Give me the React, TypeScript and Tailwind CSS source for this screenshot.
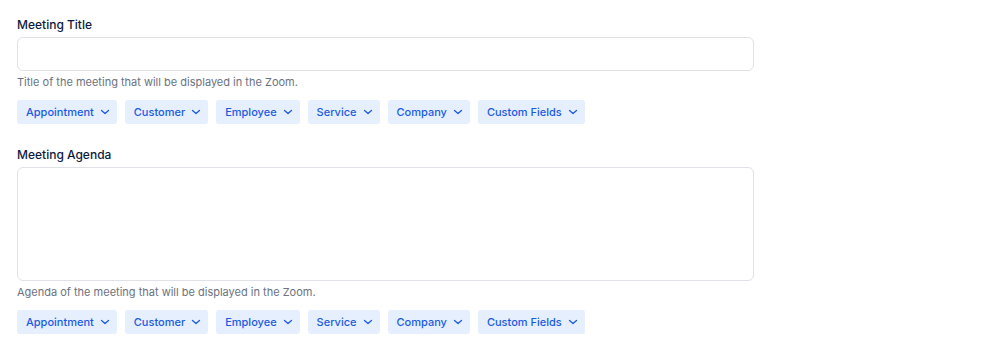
import React from "react";

const tags = ["Appointment", "Customer", "Employee", "Service", "Company", "Custom Fields"];

function Chevron() {
  return (
    <svg width="10" height="10" viewBox="0 0 10 10" fill="none" className="ml-[6px]">
      <path d="M1.5 3.5 5 6.5 8.5 3.5" stroke="currentColor" strokeWidth="1.3" strokeLinecap="round" strokeLinejoin="round" />
    </svg>
  );
}

function Tags() {
  return (
    <div className="flex gap-[8px]">
      {tags.map((t) => (
        <button
          key={t}
          className="flex h-[24px] items-center rounded-[3px] bg-[#e6effd] pl-[9px] pr-[7px] text-[11px] font-medium leading-none text-[#1a5be3]"
        >
          {t}
          <Chevron />
        </button>
      ))}
    </div>
  );
}

export default function App() {
  return (
    <div className="min-h-[350px] w-full bg-white pl-[17px] pt-[17px]" style={{ fontFamily: "Inter, 'Noto Sans', sans-serif" }}>
      <div className="w-[737px]">
        <label className="block text-[12px] font-medium leading-[16px] text-[#0d1a3c]">Meeting Title</label>
        <div className="mt-[4px] h-[34px] rounded-[6px] border border-[#dfe1e7] bg-white" />
        <p className="mt-[4px] text-[11px] leading-[14px] text-[#6b7280]">Title of the meeting that will be displayed in the Zoom.</p>
        <div className="mt-[11px]">
          <Tags />
        </div>
        <label className="mt-[23px] block text-[12px] font-medium leading-[16px] text-[#0d1a3c]">Meeting Agenda</label>
        <div className="mt-[4px] h-[114px] rounded-[6px] border border-[#dfe1e7] bg-white" />
        <p className="mt-[4px] text-[11px] leading-[14px] text-[#6b7280]">Agenda of the meeting that will be displayed in the Zoom.</p>
        <div className="mt-[11px]">
          <Tags />
        </div>
      </div>
    </div>
  );
}
